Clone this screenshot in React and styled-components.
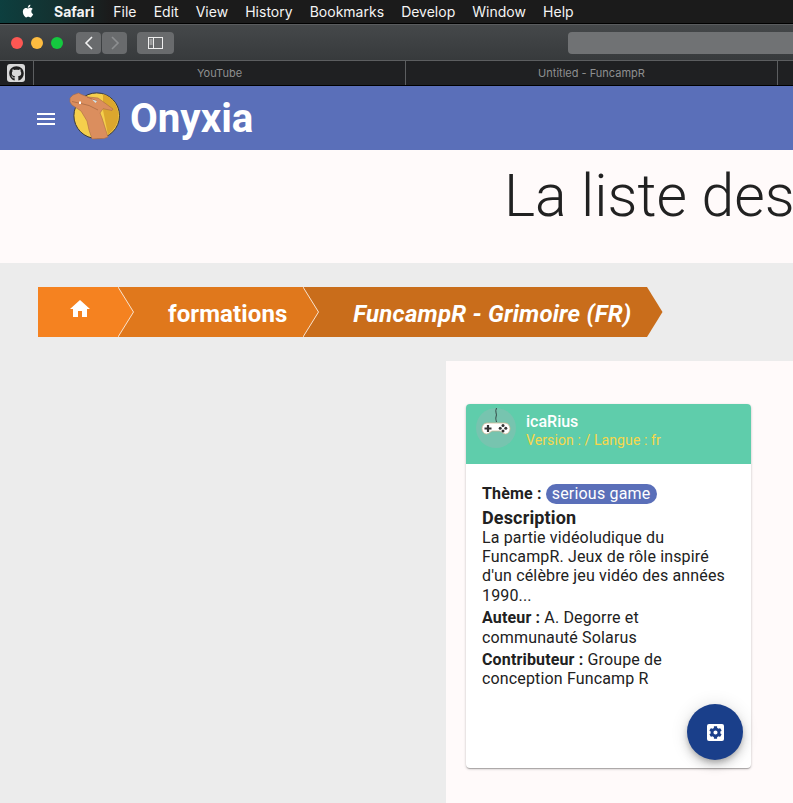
import styled, { createGlobalStyle } from "styled-components";
import { FaCog, FaGithub } from "react-icons/fa";

const GlobalStyle = createGlobalStyle`
  html, body {
    margin: 0;
    padding: 0;
    height: 100%;
    overflow: hidden;
    background: #ececec;
    font-family: Roboto, "Liberation Sans", sans-serif;
  }
  * { box-sizing: border-box; }
`;

const MENU_ITEMS = ["File", "Edit", "View", "History", "Bookmarks", "Develop", "Window", "Help"];

function App() {
  return (
    <>
      <GlobalStyle />
      <Page>
        <MenuBar>
          <AppleLogo viewBox="0 0 24 24">
            <path d="M17.05 12.6c0-2.3 1.9-3.4 2-3.5-1.1-1.6-2.8-1.8-3.4-1.8-1.4-.1-2.8.9-3.6.9-.7 0-1.9-.9-3.1-.8-1.6 0-3.1.9-3.9 2.3-1.7 2.9-.4 7.2 1.2 9.5.8 1.1 1.7 2.4 3 2.4 1.2 0 1.7-.8 3.1-.8 1.5 0 1.9.8 3.2.8 1.3 0 2.1-1.2 2.9-2.3.9-1.3 1.3-2.6 1.3-2.7-.1 0-2.7-1-2.7-4zM14.6 5.6c.7-.8 1.1-2 1-3.1-1 0-2.2.7-2.9 1.5-.6.7-1.2 1.9-1 3 1.1.1 2.2-.6 2.9-1.4z" fill="#fff" />
          </AppleLogo>
          <AppName>Safari</AppName>
          {MENU_ITEMS.map((label) => (
            <MenuItem key={label}>{label}</MenuItem>
          ))}
        </MenuBar>

        <Toolbar>
          <Light $color="#fc5753" />
          <Light $color="#fdbc40" />
          <Light $color="#14c83f" />
          <NavGroup>
            <NavButton>
              <svg width="12" height="14" viewBox="0 0 12 14">
                <path d="M9 1 3 7l6 6" fill="none" stroke="#f2f2f2" strokeWidth="1.6" />
              </svg>
            </NavButton>
            <NavButton>
              <svg width="12" height="14" viewBox="0 0 12 14">
                <path d="m3 1 6 6-6 6" fill="none" stroke="#8d8f91" strokeWidth="1.6" />
              </svg>
            </NavButton>
          </NavGroup>
          <SidebarButton>
            <svg width="16" height="12" viewBox="0 0 16 12">
              <rect x=".5" y=".5" width="14" height="11" fill="none" stroke="#eee" />
              <path d="M5.500 0v12" stroke="#eee" />
              <path d="M1.500 3h3M1.500 5h3M1.500 7h3" stroke="#ccc" />
            </svg>
          </SidebarButton>
          <SearchField />
        </Toolbar>

        <TabBar>
          <PinnedTab>
            <PinnedIcon>
              <FaGithub size={15} color="#1f1f1f" />
            </PinnedIcon>
          </PinnedTab>
          <Tab>YouTube</Tab>
          <Tab>Untitled - FuncampR</Tab>
        </TabBar>

        <AppBar>
          <Burger>
            <span />
            <span />
            <span />
          </Burger>
          <Logo viewBox="0 0 60 56">
            <circle cx="31.700" cy="27.700" r="22.800" fill="#f5cf4c" stroke="#3d3b38" strokeWidth="1" />
            <path d="M38 6a22.500 22.500 0 0 1 8 38l-3 3-5-25z" fill="#dca72e" />
            <path
              d="M5 10l3-3 5.500-2 3 1.500L23 9l10 1 15 11-1 1.500-9-1.800-3 4.300 2 5 6 19-4 1.500-12 .5-3-9-2-9-6-10-9-6-2-3z"
              fill="#db8e5e"
              stroke="#a96b45"
              strokeWidth=".6"
            />
            <path d="M7 13.500l9 2 8 2 9 4.500M22 9l10 4" fill="none" stroke="#a96b45" strokeWidth=".8" />
            <path d="M27 11.500l5 1.500-1.500 2z" fill="#cfe3ea" />
            <path d="M14 13.500h2v2.500h-2z" fill="#fff" />
          </Logo>
          <Brand>Onyxia</Brand>
        </AppBar>

        <Hero>
          <HeroTitle>La liste des formations</HeroTitle>
        </Hero>

        <Main>
          <Breadcrumb>
            <Crumb $bg="#f58220" $layer={3} $first>
              <svg width="24" height="24" viewBox="0 0 24 24">
                <path d="M10 20v-6h4v6h5v-8h3L12 3 2 12h3v8z" fill="#fff" />
              </svg>
              <CrumbTip $bg="#f58220" viewBox="0 0 16 50" preserveAspectRatio="none">
                <path d="M0 0l15.500 25L0 50z" />
                <path d="M0 0l15.500 25L0 50" />
              </CrumbTip>
            </Crumb>
            <Crumb $bg="#e0781c" $layer={2}>
              formations
              <CrumbTip $bg="#e0781c" viewBox="0 0 16 50" preserveAspectRatio="none">
                <path d="M0 0l15.500 25L0 50z" />
                <path d="M0 0l15.500 25L0 50" />
              </CrumbTip>
            </Crumb>
            <Crumb $bg="#c96d1b" $layer={1} $italic>
              FuncampR - Grimoire (FR)
              <CrumbTip $bg="#c96d1b" $plain viewBox="0 0 16 50" preserveAspectRatio="none">
                <path d="M0 0l15.500 25L0 50z" />
              </CrumbTip>
            </Crumb>
          </Breadcrumb>

          <Panel>
            <Card>
              <CardHeader>
                <Avatar>
                  <svg width="40" height="40" viewBox="0 0 40 40">
                    <path d="M20.500 0c-2 4 1 6-.5 9-.5 1.500 0 3 .5 5" fill="none" stroke="#2c3a3a" strokeWidth=".9" />
                    <path
                      d="M11 15h18c3 0 5 3 5 5.500 0 3-2 5.500-4.500 5.500-3 0-4-3-6-3h-7c-2 0-3 3-6 3-2.500 0-4.500-2.500-4.500-5.500C6 18 8 15 11 15z"
                      fill="#fff"
                      stroke="#cdb894"
                      strokeWidth=".8"
                    />
                    <path d="M8.500 20.500h7M12 17v7" stroke="#333" strokeWidth="2.200" />
                    <circle cx="27" cy="17.500" r="1.500" fill="#333" />
                    <circle cx="27" cy="23" r="1.500" fill="#333" />
                    <circle cx="24.200" cy="20.300" r="1.500" fill="#333" />
                    <circle cx="29.800" cy="20.300" r="1.500" fill="#333" />
                  </svg>
                </Avatar>
                <CardHeading>
                  <CardTitle>icaRius</CardTitle>
                  <CardSubtitle>Version : / Langue : fr</CardSubtitle>
                </CardHeading>
              </CardHeader>
              <CardBody>
                <ThemeLine>
                  <strong>Thème :</strong> <Chip>serious game</Chip>
                </ThemeLine>
                <SectionTitle>Description</SectionTitle>
                <Paragraph>
                  La partie vidéoludique du FuncampR. Jeux de rôle inspiré d'un célèbre jeu vidéo des années 1990...
                </Paragraph>
                <Paragraph $spaced>
                  <strong>Auteur :</strong> A. Degorre et communauté Solarus
                </Paragraph>
                <Paragraph $spaced>
                  <strong>Contributeur :</strong> Groupe de conception Funcamp R
                </Paragraph>
              </CardBody>
              <Fab>
                <FabIcon>
                  <FaCog size={13} color="#1a3f8a" />
                </FabIcon>
              </Fab>
            </Card>
          </Panel>
        </Main>
      </Page>
    </>
  );
}

const Page = styled.div`
  width: 793px;
  height: 803px;
  overflow: hidden;
  display: flex;
  flex-direction: column;
`;
const MenuBar = styled.div`
  height: 24px;
  flex: none;
  display: flex;
  align-items: center;
  padding: 0 0 1px 20px;
  background: linear-gradient(90deg, #0d3f3f 0, #14302f 60px, #1b1b1b 110px);
  border-bottom: 1px solid #000;
  color: #f4f4f4;
  font: 400 14px Inter, Roboto, sans-serif;
`;
const AppleLogo = styled.svg`
  width: 16px;
  height: 16px;
  margin-right: 18px;
`;
const AppName = styled.span`
  font-weight: 700;
  margin-right: 19px;
`;
const MenuItem = styled.span`
  margin-right: 17.100px;
`;
const Toolbar = styled.div`
  height: 36px;
  flex: none;
  display: flex;
  align-items: center;
  padding-left: 11px;
  background: linear-gradient(180deg, #45484a, #373a3c);
  border-top: 1px solid #5a5c5e;
`;
const Light = styled.span`
  width: 12px;
  height: 12px;
  border-radius: 50%;
  background: ${(p) => p.$color};
  margin-right: 8px;
`;
const NavGroup = styled.div`
  display: flex;
  gap: 1px;
  margin: 0 10px 0 5px;
`;
const NavButton = styled.div`
  width: 25px;
  height: 22px;
  border-radius: 4px;
  background: #696b6d;
  display: flex;
  align-items: center;
  justify-content: center;
`;
const SidebarButton = styled(NavButton)`
  width: 37px;
`;
const SearchField = styled.div`
  width: 225px;
  height: 22px;
  margin-left: auto;
  border-radius: 4px 0 0 4px;
  background: #707274;
`;
const TabBar = styled.div`
  height: 26px;
  flex: none;
  display: flex;
  background: #1f2022;
  border-top: 1px solid #5c5e60;
  border-bottom: 1px solid #000;
`;
const PinnedTab = styled.div`
  width: 34px;
  flex: none;
  display: flex;
  align-items: center;
  padding-left: 7px;
  border-right: 1px solid #5c5e60;
`;
const PinnedIcon = styled.div`
  width: 18px;
  height: 18px;
  border-radius: 3px;
  background: #d8d8d8;
  display: flex;
  align-items: center;
  justify-content: center;
`;
const Tab = styled.div`
  width: 372px;
  flex: none;
  display: flex;
  align-items: center;
  justify-content: center;
  border-right: 1px solid #5c5e60;
  color: #8e8f90;
  font: 400 11px Inter, Roboto, sans-serif;
`;
const AppBar = styled.header`
  height: 64px;
  flex: none;
  display: flex;
  align-items: center;
  padding-left: 37px;
  background: #5a6fb9;
`;
const Burger = styled.div`
  width: 18px;
  display: flex;
  flex-direction: column;
  gap: 3px;
  margin-top: 1px;
  span {
    height: 2px;
    background: #fff;
  }
`;
const Logo = styled.svg`
  width: 60px;
  height: 56px;
  margin: -4px 5px 0 10px;
`;
const Brand = styled.div`
  color: #fff;
  font-size: 40.300px;
  font-weight: 700;
  line-height: 1;
  margin-top: 3px;
`;
const Hero = styled.div`
  height: 113px;
  flex: none;
  padding-left: 504px;
  background: #fffafa;
  overflow: hidden;
`;
const HeroTitle = styled.h1`
  margin: 10px 0 0;
  font-size: 59px;
  font-weight: 300;
  line-height: 72px;
  color: #212121;
  white-space: nowrap;
`;
const Main = styled.main`
  flex: 1;
  display: flex;
  flex-direction: column;
  padding-top: 24px;
  background: #ececec;
  min-height: 0;
`;
const Breadcrumb = styled.nav`
  display: flex;
  height: 50px;
  margin-left: 38px;
  flex: none;
`;
const Crumb = styled.div`
  position: relative;
  z-index: ${(p) => p.$layer};
  display: flex;
  align-items: center;
  justify-content: center;
  padding: ${(p) => (p.$first ? "0 0 6px 4px" : "4px 16px 0 50px")};
  width: ${(p) => (p.$first ? "80px" : "auto")};
  background: ${(p) => p.$bg};
  color: #fff;
  font-size: 24px;
  font-weight: 700;
  font-style: ${(p) => (p.$italic ? "italic" : "normal")};
  letter-spacing: ${(p) => (p.$italic ? "0.2px" : "0.1px")};
  white-space: nowrap;
`;
const CrumbTip = styled.svg`
  position: absolute;
  left: 100%;
  top: 0;
  width: 16px;
  height: 50px;
  path:first-child {
    fill: ${(p) => p.$bg};
  }
  path:last-child {
    fill: ${(p) => (p.$plain ? p.$bg : "none")};
    stroke: ${(p) => (p.$plain ? "none" : "#f7e3d0")};
    stroke-width: 1;
  }
`;
const Panel = styled.section`
  flex: 1;
  margin: 24px 0 0 446px;
  padding: 43px 42px 0 20px;
  background: #fffafa;
`;
const Card = styled.article`
  position: relative;
  height: 364px;
  border-radius: 4px;
  background: #fff;
  box-shadow: 0 1px 3px rgba(0, 0, 0, 0.2), 0 1px 1px rgba(0, 0, 0, 0.14), 0 2px 1px -1px rgba(0, 0, 0, 0.12);
`;
const CardHeader = styled.div`
  height: 60px;
  display: flex;
  align-items: flex-start;
  gap: 10px;
  padding: 4px 0 0 10px;
  border-radius: 4px 4px 0 0;
  background: #5fcdab;
`;
const Avatar = styled.div`
  width: 40px;
  height: 40px;
  border-radius: 50%;
  background: #77c4af;
  flex: none;
  svg {
    overflow: visible;
    display: block;
  }
`;
const CardHeading = styled.div`
  display: flex;
  flex-direction: column;
  padding-top: 4px;
`;
const CardTitle = styled.div`
  color: #fff;
  font-size: 16px;
  font-weight: 500;
  line-height: 19px;
`;
const CardSubtitle = styled.div`
  color: #f8d74a;
  font-size: 14px;
  line-height: 18px;
  letter-spacing: 0.1px;
`;
const CardBody = styled.div`
  padding: 18px 16px 0;
  color: #212121;
  font-size: 16px;
  line-height: 19.200px;
  letter-spacing: 0.15px;
  strong {
    font-weight: 700;
  }
`;
const ThemeLine = styled.div`
  line-height: 24px;
`;
const Chip = styled.span`
  display: inline-block;
  padding: 0 6px;
  border-radius: 10px;
  background: #5a6fb9;
  color: #fff;
  line-height: 20px;
  letter-spacing: 0.2px;
`;
const SectionTitle = styled.div`
  font-size: 18px;
  font-weight: 700;
  line-height: 21px;
  margin-top: 1px;
`;
const Paragraph = styled.p`
  margin: ${(p) => (p.$spaced ? "3.500px" : "0")} 0 0;
`;
const Fab = styled.div`
  position: absolute;
  right: 8px;
  bottom: 8px;
  width: 56px;
  height: 56px;
  border-radius: 50%;
  background: #1a3f8a;
  display: flex;
  align-items: center;
  justify-content: center;
  box-shadow: 0 3px 5px -1px rgba(0, 0, 0, 0.2), 0 6px 10px 0 rgba(0, 0, 0, 0.14), 0 1px 18px 0 rgba(0, 0, 0, 0.12);
`;
const FabIcon = styled.div`
  width: 17px;
  height: 17px;
  border-radius: 2px;
  background: #fff;
  display: flex;
  align-items: center;
  justify-content: center;
`;

export default App;
